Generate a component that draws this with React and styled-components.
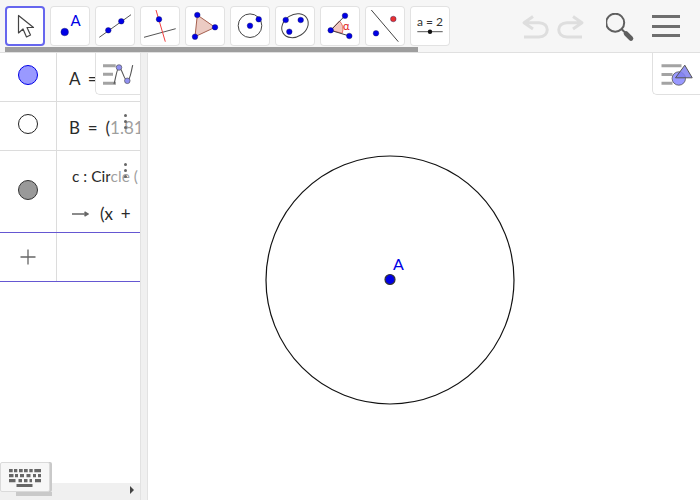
import React from 'react'
import styled, { createGlobalStyle } from 'styled-components'

const BLUE = '#0000e6'

const GlobalStyle = createGlobalStyle`
  html, body {
    margin: 0;
    height: 100%;
    background: #fff;
    overflow: hidden;
  }
  * {
    box-sizing: border-box;
  }
`

function Dot({ x, y, r = 2.8, fill = BLUE }) {
  return <circle cx={x} cy={y} r={r} fill={fill} stroke="#1a1a5a" strokeWidth="0.4" />
}

const tools = [
  {
    name: 'move',
    active: true,
    icon: (
      <path
        d="M13.5 9.5 L13.5 27 L18 23 L21.5 31 L25.5 29 L22 21.5 L28.5 21.5 Z"
        fill="#fff"
        stroke="#444"
        strokeWidth="1.2"
        strokeLinejoin="round"
      />
    ),
  },
  {
    name: 'point',
    icon: (
      <>
        <Dot x={14.7} y={26} r={3.8} />
        <text x={20.5} y={20} fontSize="15" fill={BLUE} fontFamily="Lato, sans-serif">A</text>
      </>
    ),
  },
  {
    name: 'line',
    icon: (
      <>
        <line x1="4.3" y1="31.3" x2="36" y2="8.7" stroke="#555" strokeWidth="1" />
        <Dot x={13.3} y={24.3} />
        <Dot x={26.3} y={15.3} />
      </>
    ),
  },
  {
    name: 'perpendicular',
    icon: (
      <>
        <line x1="4" y1="31.3" x2="35.7" y2="22.7" stroke="#555" strokeWidth="1" />
        <line x1="16" y1="4" x2="25.3" y2="35.7" stroke="#f04040" strokeWidth="1" />
        <Dot x={19} y={13.3} />
      </>
    ),
  },
  {
    name: 'polygon',
    icon: (
      <>
        <polygon points="12.3,9 30,21.3 10,30.7" fill="#eccbc3" stroke="#a5604f" strokeWidth="1" />
        <Dot x={12.3} y={9} />
        <Dot x={30} y={21.3} />
        <Dot x={10} y={30.7} />
      </>
    ),
  },
  {
    name: 'circle',
    icon: (
      <>
        <circle cx="20" cy="19.7" r="11.8" fill="none" stroke="#444" strokeWidth="1" />
        <Dot x={20} y={19.7} />
        <Dot x={28.7} y={13.3} />
      </>
    ),
  },
  {
    name: 'conic',
    icon: (
      <>
        <ellipse cx="20" cy="19.7" rx="14" ry="11" transform="rotate(-32 20 19.7)" fill="none" stroke="#444" strokeWidth="1" />
        <Dot x={10.7} y={14} />
        <Dot x={25.7} y={14} />
        <Dot x={14.3} y={25.7} />
      </>
    ),
  },
  {
    name: 'angle',
    icon: (
      <>
        <path d="M10.7 24.3 L19.5 15 A12 12 0 0 1 22.2 27.3 Z" fill="#f3c8c0" stroke="#e05050" strokeWidth="0.8" />
        <line x1="10.7" y1="24.3" x2="25" y2="9.7" stroke="#444" strokeWidth="1" />
        <line x1="10.7" y1="24.3" x2="29.3" y2="30" stroke="#444" strokeWidth="1" />
        <Dot x={10.7} y={24.3} />
        <Dot x={25} y={9.7} />
        <Dot x={29.3} y={30} />
        <text x={23} y={24} fontSize="11" fill="#e02020" fontFamily="Lato, sans-serif">α</text>
      </>
    ),
  },
  {
    name: 'reflect',
    icon: (
      <>
        <line x1="6.3" y1="4" x2="33.3" y2="35.7" stroke="#444" strokeWidth="1" />
        <Dot x={28.3} y={13} fill="#e83030" />
        <Dot x={11} y={27.3} />
      </>
    ),
  },
  {
    name: 'slider',
    icon: (
      <>
        <text x={20} y={20} fontSize="12" textAnchor="middle" fill="#333" fontFamily="Lato, sans-serif">a = 2</text>
        <line x1="7.3" y1="25.7" x2="32.7" y2="25.7" stroke="#555" strokeWidth="1" />
        <circle cx="20" cy="25.7" r="2.2" fill="#111" />
      </>
    ),
  },
]

function Undo({ flip }) {
  return (
    <IconSvg width="28" height="24" viewBox="0 0 28 24" $flip={flip}>
      <path
        d="M3 7.7 H18 C29 7.7 29 22 18 22 H3 M12 1.5 L3 7.7 L12 14"
        fill="none"
        stroke="#dedede"
        strokeWidth="3"
        strokeLinejoin="round"
      />
    </IconSvg>
  )
}

function Algebra() {
  return (
    <AlgebraPanel>
      <Row $height={49}>
        <MarbleCell>
          <Marble $fill="#9999ff" $stroke="#0000e6" $size={20} />
        </MarbleCell>
        <InputCell>
          <Formula>A =</Formula>
        </InputCell>
      </Row>
      <Row $height={49}>
        <MarbleCell>
          <Marble $fill="#fff" $stroke="#222" $size={20} />
        </MarbleCell>
        <InputCell>
          <Formula>B = (1.81</Formula>
          <RowMenu><span /><span /><span /></RowMenu>
        </InputCell>
      </Row>
      <Row $height={82} $last>
        <MarbleCell>
          <Marble $fill="#999" $stroke="#333" $size={20} />
        </MarbleCell>
        <InputCell $stack>
          <Definition>c : Circle (</Definition>
          <Result>
            <svg width="17" height="8" viewBox="0 0 17 8">
              <path d="M0 4 H15.5 M12.5 2 L16 4 L12.5 6" fill="none" stroke="#666" strokeWidth="1.6" />
            </svg>
            <Formula>(x +</Formula>
          </Result>
          <RowMenu $short><span /><span /><span /></RowMenu>
        </InputCell>
      </Row>
      <Row $height={49} $last>
        <MarbleCell>
          <PlusIcon width="16" height="16" viewBox="0 0 16 16">
            <path d="M0.5 8 H15.5 M8 0.5 V15.5" stroke="#666" strokeWidth="1.3" />
          </PlusIcon>
        </MarbleCell>
        <InputCell />
      </Row>

      <StyleButton $left>
        <svg width="34" height="24" viewBox="0 0 34 24">
          <path d="M2 3.8 H14.7 M2 12.2 H12 M2 21.2 H15" stroke="#a3a3a3" strokeWidth="3" />
          <path d="M13 22.2 C15 15 16 5.5 18 5.5 C21 5.5 23 18.8 26.3 18.8 C29 18.8 30 10 31.7 3.2" fill="none" stroke="#555" strokeWidth="1.1" />
          <circle cx="18" cy="5.5" r="2.8" fill="#9090f0" stroke="#444" strokeWidth="0.6" />
          <circle cx="26.3" cy="18.8" r="2.8" fill="#9090f0" stroke="#444" strokeWidth="0.6" />
        </svg>
      </StyleButton>

      <HScroll>
        <svg width="6" height="8" viewBox="0 0 6 8">
          <path d="M1 0 L5 4 L1 8 Z" fill="#444" />
        </svg>
      </HScroll>
    </AlgebraPanel>
  )
}

function App() {
  return (
    <>
      <GlobalStyle />
      <Page>
        <Header>
          <Tools>
            {tools.map((t) => (
              <ToolButton key={t.name} $active={t.active} title={t.name}>
                <svg width="40" height="40" viewBox="0 0 40 40">{t.icon}</svg>
              </ToolButton>
            ))}
          </Tools>
          <Actions>
            <UndoGroup>
              <Undo />
              <Undo flip />
            </UndoGroup>
            <svg width="32" height="30" viewBox="0 0 32 30">
              <circle cx="9.2" cy="9.7" r="9" fill="none" stroke="#5f5f5f" strokeWidth="2" />
              <path d="M15.5 16 L19 19.5" stroke="#5f5f5f" strokeWidth="2" />
              <path d="M20 20.5 L25 25.5" stroke="#5f5f5f" strokeWidth="4.6" strokeLinecap="round" />
            </svg>
            <MenuBars><span /><span /><span /></MenuBars>
          </Actions>
          <ToolScroll />
        </Header>
        <Body>
          <Algebra />
          <Divider />
          <Canvas>
            <svg width="552" height="447" viewBox="148 53 552 447">
              <circle cx="390" cy="280" r="124" fill="none" stroke="#111" strokeWidth="1.2" />
              <circle cx="390" cy="279.5" r="5" fill={BLUE} stroke="#333" strokeWidth="1.2" />
              <text x="393" y="270" fontSize="16" fill={BLUE} fontFamily="Lato, sans-serif">A</text>
            </svg>
            <StyleButton>
              <svg width="32" height="24" viewBox="0 0 32 24">
                <path d="M0.5 3.8 H20.5 M0.5 12.5 H11.5 M0.5 21.2 H11.5" stroke="#a3a3a3" strokeWidth="3" />
                <circle cx="17.8" cy="16.5" r="6.7" fill="#9999ff" stroke="#555" strokeWidth="0.8" />
                <path d="M23.8 3.2 L31.2 15.8 H14.5 Z" fill="#8080f0" fillOpacity="0.85" stroke="#555" strokeWidth="1" />
              </svg>
            </StyleButton>
          </Canvas>
        </Body>
        <KeyboardButton>
          <svg width="32" height="18" viewBox="0 0 32 18">
            <path
              d="M0 0 H3.7 V3.3 H0 Z M5 0 H8.3 V3.3 H5 Z M10 0 H13.7 V3.3 H10 Z M15 0 H18.7 V3.3 H15 Z M20.3 0 H23.7 V3.3 H20.3 Z M25.3 0 H32 V3.3 H25.3 Z
                 M0 5 H4.5 V8.3 H0 Z M6 5 H9 V8.3 H6 Z M11 5 H15 V8.3 H11 Z M17.5 5 H21.5 V8.3 H17.5 Z M24 5 H27 V8.3 H24 Z M29 5 H32 V8.3 H29 Z
                 M0 10 H6.5 V13.3 H0 Z M9.5 10 H13 V13.3 H9.5 Z M15 10 H18.5 V13.3 H15 Z M20.5 10 H23 V13.3 H20.5 Z M26 10 H32 V13.3 H26 Z
                 M7.5 15 H23.5 V18 H7.5 Z"
              fill="#666"
            />
          </svg>
        </KeyboardButton>
      </Page>
    </>
  )
}

const Page = styled.div`
  position: relative;
  width: 700px;
  height: 500px;
  display: flex;
  flex-direction: column;
  overflow: hidden;
  font-family: Lato, "Open Sans", sans-serif;
  color: #2a2a2a;
`

const Header = styled.header`
  position: relative;
  flex: 0 0 53px;
  display: flex;
  justify-content: space-between;
  padding: 6px 20px 0 5px;
  background: #f6f6f6;
  border-bottom: 1px solid #e0e0e0;
`

const Tools = styled.div`
  display: flex;
  gap: 5px;
  align-items: flex-start;
`

const ToolButton = styled.div`
  width: 40px;
  height: 40px;
  background: #fff;
  border-radius: 4px;
  box-shadow: inset 0 0 0 ${(p) => (p.$active ? '2px #6666ee' : '1px #e2e2e2')};
  svg {
    display: block;
  }
`

const ToolScroll = styled.div`
  position: absolute;
  left: 5px;
  bottom: 0;
  width: 413px;
  height: 5px;
  background: #9e9e9e;
`

const Actions = styled.div`
  display: flex;
  align-items: flex-start;
  padding-top: 7px;
  svg {
    display: block;
  }
`

const UndoGroup = styled.div`
  display: flex;
  gap: 8px;
  margin-top: 2px;
  margin-right: 21px;
`

const IconSvg = styled.svg`
  transform: ${(p) => (p.$flip ? 'scaleX(-1)' : 'none')};
`

const MenuBars = styled.div`
  width: 28px;
  margin-left: 14px;
  margin-top: 2px;
  display: flex;
  flex-direction: column;
  gap: 6.6px;
  span {
    height: 3px;
    background: #6e6e6e;
  }
`

const Body = styled.div`
  flex: 1;
  display: flex;
  min-height: 0;
`

const AlgebraPanel = styled.section`
  position: relative;
  flex: 0 0 140px;
  display: flex;
  flex-direction: column;
  overflow: hidden;
`

const Row = styled.div`
  flex: 0 0 ${(p) => p.$height}px;
  display: flex;
  border-bottom: 1px solid ${(p) => (p.$last ? '#6557d2' : '#dcdcdc')};
`

const MarbleCell = styled.div`
  flex: 0 0 57px;
  display: flex;
  align-items: center;
  justify-content: center;
  border-right: 1px solid #dcdcdc;
`

const Marble = styled.div`
  width: ${(p) => p.$size}px;
  height: ${(p) => p.$size}px;
  border-radius: 50%;
  background: ${(p) => p.$fill};
  border: 1px solid ${(p) => p.$stroke};
  margin-top: -4px;
`

const PlusIcon = styled.svg`
  display: block;
`

const InputCell = styled.div`
  position: relative;
  flex: 1;
  min-width: 0;
  display: flex;
  flex-direction: ${(p) => (p.$stack ? 'column' : 'row')};
  align-items: ${(p) => (p.$stack ? 'flex-start' : 'center')};
  padding-left: ${(p) => (p.$stack ? '15px' : '12px')};
  padding-top: ${(p) => (p.$stack ? '15px' : '4px')};
  gap: 18px;
  overflow: hidden;
  white-space: nowrap;
`

const Formula = styled.div`
  font-size: 17px;
  line-height: 20px;
  word-spacing: 3.5px;
`

const Definition = styled.div`
  font-size: 15.5px;
  line-height: 20px;
`

const Result = styled.div`
  display: flex;
  align-items: center;
  gap: 11px;
`

const RowMenu = styled.div`
  position: absolute;
  top: 9px;
  right: 0;
  width: 30px;
  height: ${(p) => (p.$short ? '30px' : 'auto')};
  bottom: ${(p) => (p.$short ? 'auto' : '0')};
  padding-top: 3px;
  background: rgba(255, 255, 255, 0.55);
  display: flex;
  flex-direction: column;
  gap: 2.6px;
  align-items: flex-start;
  span {
    margin-left: 14px;
    width: 3.4px;
    height: 3.4px;
    border-radius: 50%;
    background: #666;
  }
`

const StyleButton = styled.div`
  position: absolute;
  top: 0;
  ${(p) => (p.$left ? 'left: 95px; width: 45px;' : 'right: 0; width: 48px;')}
  height: 42px;
  display: flex;
  align-items: center;
  justify-content: center;
  background: #fff;
  border-left: 1px solid #e0e0e0;
  border-bottom: 1px solid #e0e0e0;
  border-bottom-left-radius: 5px;
`

const HScroll = styled.div`
  position: absolute;
  left: 0;
  right: 0;
  bottom: 0;
  height: 17px;
  display: flex;
  align-items: center;
  justify-content: flex-end;
  padding: 0 5px 3px 0;
  background: #f0f0f0;
`

const Divider = styled.div`
  flex: 0 0 8px;
  background: #f0f0f0;
  border-left: 1px solid #e2e2e2;
  border-right: 1px solid #e2e2e2;
`

const Canvas = styled.main`
  position: relative;
  flex: 1;
  min-width: 0;
  svg {
    display: block;
  }
`

const KeyboardButton = styled.div`
  position: absolute;
  left: 0;
  top: 462px;
  width: 50px;
  height: 30px;
  display: flex;
  align-items: center;
  justify-content: center;
  padding-top: 2px;
  background: #f7f7f7;
  border: 1px solid #dadada;
  border-radius: 2px;
  box-shadow: 2px 0 0 #c9c9c9;
  &::after {
    content: '';
    position: absolute;
    left: 15px;
    right: -3px;
    bottom: -5px;
    height: 4px;
    background: #c9c9c9;
  }
`

export default App
